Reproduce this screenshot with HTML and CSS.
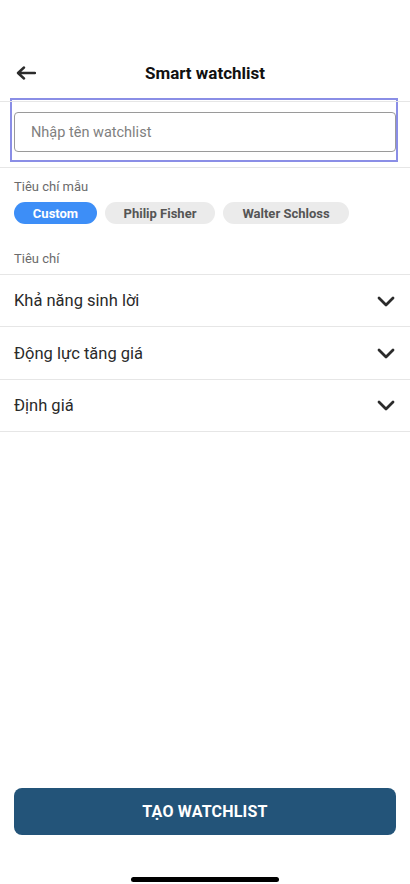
FILE: index.html
```html
<!DOCTYPE html>
<html lang="vi">
<head>
<meta charset="utf-8">
<link rel="stylesheet" href="styles.css">
</head>
<body>
<div class="screen">
  <div class="status"></div>
  <header class="nav">
    <button class="back" aria-label="Back">
      <svg width="20" height="14" viewBox="0 0 20 14"><path d="M19 7H2.5M8 1.5L2 7l6 5.5" fill="none" stroke="#2b2b2b" stroke-width="2.4" stroke-linecap="round" stroke-linejoin="round"/></svg>
    </button>
    <h1 class="title">Smart watchlist</h1>
  </header>
  <section class="name-section">
    <div class="focus-ring">
      <div class="input">Nhập tên watchlist</div>
    </div>
  </section>
  <section class="templates">
    <div class="label">Tiêu chí mẫu</div>
    <div class="chips">
      <span class="chip active">Custom</span>
      <span class="chip">Philip Fisher</span>
      <span class="chip">Walter Schloss</span>
    </div>
    <div class="label label-criteria">Tiêu chí</div>
  </section>
  <ul class="rows">
    <li class="row"><span>Khả năng sinh lời</span><svg class="chev" width="18" height="11" viewBox="0 0 18 11"><path d="M2 2l7 7 7-7" fill="none" stroke="#2b2b2b" stroke-width="2.8" stroke-linecap="round" stroke-linejoin="round"/></svg></li>
    <li class="row"><span>Động lực tăng giá</span><svg class="chev" width="18" height="11" viewBox="0 0 18 11"><path d="M2 2l7 7 7-7" fill="none" stroke="#2b2b2b" stroke-width="2.8" stroke-linecap="round" stroke-linejoin="round"/></svg></li>
    <li class="row"><span>Định giá</span><svg class="chev" width="18" height="11" viewBox="0 0 18 11"><path d="M2 2l7 7 7-7" fill="none" stroke="#2b2b2b" stroke-width="2.8" stroke-linecap="round" stroke-linejoin="round"/></svg></li>
  </ul>
  <div class="spacer"></div>
  <div class="footer">
    <button class="cta">TẠO WATCHLIST</button>
  </div>
  <div class="home-bar"><span></span></div>
</div>
</body>
</html>
```
FILE: styles.css
```css
* { box-sizing: border-box; }
html, body { margin: 0; padding: 0; background: #fff; }
body { font-family: Roboto, "Liberation Sans", Arial, sans-serif; color: #222; }
.screen { width: 410px; height: 884px; display: flex; flex-direction: column; overflow: hidden; }
.status { height: 44px; flex: none; }
.nav { height: 58px; flex: none; display: flex; align-items: center; justify-content: center; border-bottom: 1px solid #e6e6e6; position: relative; }
.back { position: absolute; left: 16px; top: 21px; border: 0; background: none; padding: 0; width: 22px; height: 16px; display: flex; align-items: center; }
.title { margin: 0; font-size: 17px; font-weight: 700; color: #111; }
.name-section { flex: none; border-bottom: 1px solid #e6e6e6; padding-bottom: 5px; }
.focus-ring { margin: -4px 12px 0 10px; border: 2px solid #8a8ee6; padding: 12px 0 8px 2px; }
.input { height: 40px; border: 1px solid #9a9a9a; border-radius: 4px; padding: 0 16px; display: flex; align-items: center; font-size: 14.5px; color: #808080; }
.templates { flex: none; padding: 11px 14px 0; }
.label { font-size: 13px; color: #6b6b6b; line-height: 15px; }
.chips { display: flex; gap: 8px; margin-top: 8px; }
.chip { height: 22px; border-radius: 11px; background: #ebebeb; color: #555; font-size: 13px; font-weight: 700; display: flex; align-items: center; justify-content: center; padding: 0; }
.chip.active { background: #3d8ef7; color: #fff; width: 83px; }
.chip:nth-child(2) { width: 110px; }
.chip:nth-child(3) { width: 126px; }
.label-criteria { margin-top: 27px; padding-bottom: 8px; }
.rows { list-style: none; margin: 0; padding: 0; border-top: 1px solid #e6e6e6; flex: none; }
.row { height: 52.4px; border-bottom: 1px solid #e6e6e6; display: flex; align-items: center; justify-content: space-between; padding: 0 15px 0 14px; font-size: 16.5px; color: #2a2a2a; }
.chev { flex: none; margin-top: 1px; }
.spacer { flex: 1; }
.footer { padding: 0 14px; flex: none; }
.cta { width: 100%; height: 47px; border: 0; border-radius: 8px; background: #235479; color: #fff; font-family: inherit; font-size: 16px; font-weight: 700; letter-spacing: 0.2px; }
.home-bar { height: 49px; flex: none; display: flex; justify-content: center; align-items: flex-end; padding-bottom: 2px; }
.home-bar span { width: 148px; height: 5px; border-radius: 3px; background: #000; }
```
